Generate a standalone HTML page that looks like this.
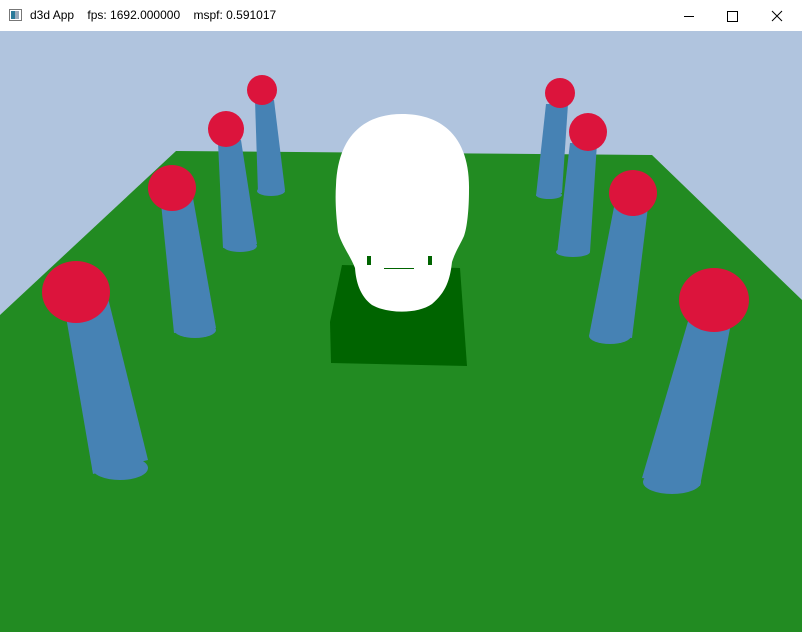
<!DOCTYPE html>
<html><head><style>
html,body{margin:0;padding:0;width:802px;height:632px;overflow:hidden;background:#fff;font-family:"Liberation Sans",sans-serif}
.t{position:absolute;left:0;top:0;width:802px;height:31px;background:#fff}
.t span{position:absolute;top:8px;font-size:12px;color:#000}
</style></head><body>
<div class="t">
<svg style="position:absolute;left:9px;top:9px" width="13" height="12"><rect x="0.5" y="0.5" width="12" height="11" fill="#fff" stroke="#777"/><rect x="2" y="2" width="4" height="8" fill="#2a7a9a"/><rect x="6" y="2" width="4" height="8" fill="#9ab"/></svg>
<span style="left:30px">d3d App &nbsp;&nbsp;&nbsp;fps: 1692.000000 &nbsp;&nbsp;&nbsp;mspf: 0.591017</span>
<svg style="position:absolute;left:680px;top:8px" width="110" height="16" fill="none" stroke="#000" stroke-width="1"><line x1="4" y1="8.5" x2="14" y2="8.5"/><rect x="47.5" y="3.5" width="10" height="10"/><path d="M92 3 L102 13 M102 3 L92 13"/></svg>
</div>
<svg style="position:absolute;left:0;top:31px" width="802" height="601" viewBox="0 31 802 601">
<rect x="0" y="31" width="802" height="601" fill="#b0c4de"/>
<polygon points="176,151 652,155 802,300 802,632 0,632 0,315" fill="#228b22"/>
<polygon points="342,265 460,268 467,366 331,363 330,322" fill="#006400"/>
<path d="M402,114 C445,114 470,140 469,190 C469,210 467,228 464,236 C460,245 456,250 452,262 C450,280 446,292 432,304 C418,314 388,314 372,305 C360,296 356,282 355,268 C350,255 342,246 338,232 C336,215 335,200 336,185 C338,135 365,114 402,114 Z" fill="#fff"/>
<g fill="#006400"><rect x="367" y="256" width="4" height="9"/><rect x="428" y="256" width="4" height="9"/><rect x="384" y="268" width="30" height="1"/></g>
<g fill="#4682b4">
<polygon points="64,305 108,298 148,460 93,474"/><ellipse cx="120" cy="468" rx="28" ry="12"/>
<polygon points="161,203 193,198 216,328 174,333"/><ellipse cx="195" cy="330" rx="21" ry="8"/>
<polygon points="218,143 241,140 257,244 223,248"/><ellipse cx="240" cy="246" rx="17" ry="6"/>
<polygon points="255,100 274,100 285,190 258,193"/><ellipse cx="271" cy="191" rx="14" ry="5"/>
<polygon points="546,104 568,104 562,193 536,196"/><ellipse cx="549" cy="195" rx="13" ry="4"/>
<polygon points="570,143 597,143 590,252 557,254"/><ellipse cx="573" cy="252" rx="17" ry="5"/>
<polygon points="614,207 648,207 632,338 589,336"/><ellipse cx="610" cy="336" rx="21" ry="8"/>
<polygon points="689,318 732,318 700,486 642,478"/><ellipse cx="672" cy="482" rx="29" ry="12"/>
</g>
<g fill="#dc143c">
<ellipse cx="76" cy="292" rx="34" ry="31"/>
<ellipse cx="172" cy="188" rx="24" ry="23"/>
<ellipse cx="226" cy="129" rx="18" ry="18"/>
<ellipse cx="262" cy="90" rx="15" ry="15"/>
<ellipse cx="560" cy="93" rx="15" ry="15"/>
<ellipse cx="588" cy="132" rx="19" ry="19"/>
<ellipse cx="633" cy="193" rx="24" ry="23"/>
<ellipse cx="714" cy="300" rx="35" ry="32"/>
</g>
</svg>
</body></html>
